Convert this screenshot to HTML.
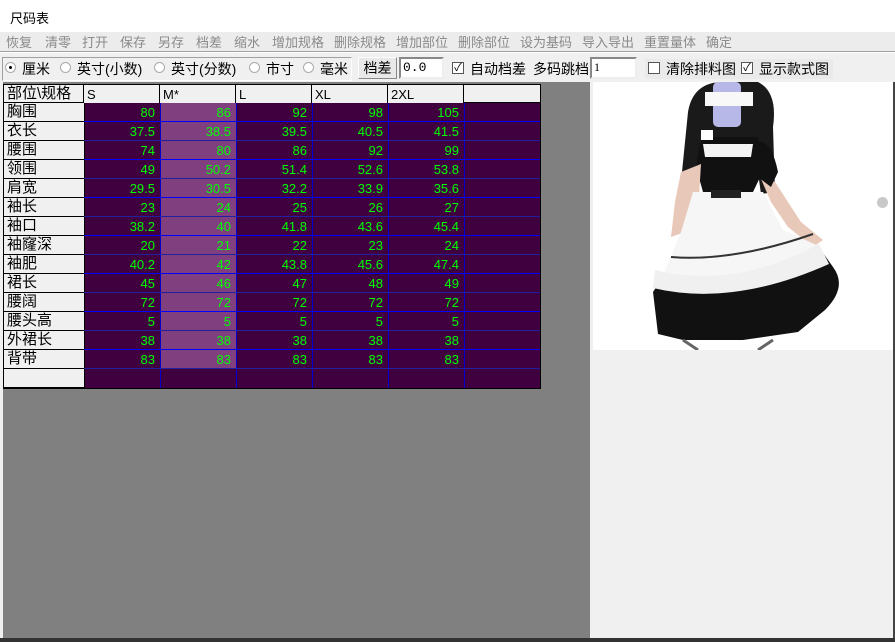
<!DOCTYPE html>
<html><head><meta charset="utf-8"><style>
*{margin:0;padding:0;box-sizing:border-box}
body{width:895px;height:642px;overflow:hidden;background:#fff;font-family:"Liberation Sans","Noto Sans CJK SC",sans-serif;position:relative}
.a{position:absolute}
.m{position:absolute;top:32px;font-size:13px;color:#8a8a8a}
.t{position:absolute;font-size:14px;color:#000;top:59px}
.rad{position:absolute;top:62px;width:11px;height:11px;border:1px solid #aaa;border-radius:50%;background:#fff}
.cb{position:absolute;top:62px;width:12px;height:12px;border:1px solid #555;background:#fff;font-size:11px;line-height:10px;text-align:center}
.rh{position:absolute;left:4px;width:80px;height:19px;background:#f0f0f0;border-bottom:1px solid #000;font-size:15px;line-height:18px;padding-left:3px;font-family:"Liberation Sans","WenQuanYi Zen Hei",sans-serif}
.c{position:absolute;height:19px;font-size:13px;color:#00ff00;text-align:right;padding-right:5px;line-height:19px;font-family:"Liberation Sans",sans-serif}
.h{position:absolute;top:85px;height:18px;background:#f0f0f0;border-right:1px solid #000;font-size:13px;padding-left:3px;line-height:19px}
</style></head><body>
<div class="a" style="left:0;top:0;width:895px;height:32px;background:#fff"></div>
<div class="a" style="left:10px;top:8px;font-size:13px">尺码表</div>
<div class="a" style="left:0;top:32px;width:895px;height:20px;background:#ececec;border-bottom:1px solid #a0a0a0"></div>
<div class="m" style="left:6px">恢复</div><div class="m" style="left:45px">清零</div><div class="m" style="left:82px">打开</div><div class="m" style="left:120px">保存</div><div class="m" style="left:158px">另存</div><div class="m" style="left:196px">档差</div><div class="m" style="left:234px">缩水</div><div class="m" style="left:272px">增加规格</div><div class="m" style="left:334px">删除规格</div><div class="m" style="left:396px">增加部位</div><div class="m" style="left:458px">删除部位</div><div class="m" style="left:520px">设为基码</div><div class="m" style="left:582px">导入导出</div><div class="m" style="left:644px">重置量体</div><div class="m" style="left:706px">确定</div>
<div class="a" style="left:0;top:53px;width:895px;height:29px;background:#f0f0f0"></div>
<div class="a" style="left:2px;top:57px;width:350px;height:24px;border:1px solid #a0a0a0;border-right-color:#fff;border-bottom-color:#fff"></div>
<div class="rad" style="left:5px"><div class="a" style="left:3px;top:3px;width:3px;height:3px;background:#000;border-radius:50%"></div></div>
<div class="t" style="left:22px">厘米</div>
<div class="rad" style="left:60px"></div><div class="t" style="left:77px">英寸(小数)</div>
<div class="rad" style="left:154px"></div><div class="t" style="left:171px">英寸(分数)</div>
<div class="rad" style="left:249px"></div><div class="t" style="left:266px">市寸</div>
<div class="rad" style="left:303px"></div><div class="t" style="left:320px">毫米</div>
<div class="a" style="left:358px;top:57px;width:39px;height:22px;background:#e8e8e8;border:1px solid #888;border-top-color:#fff;border-left-color:#fff;font-size:14px;text-align:center;line-height:20px">档差</div>
<div class="a" style="left:399px;top:57px;width:45px;height:22px;background:#fff;border:2px solid #888;border-right-color:#eee;border-bottom-color:#eee;font-family:'Liberation Mono',monospace;font-size:13px;padding-left:2px;line-height:17px">0.0</div>
<div class="cb" style="left:452px">✓</div><div class="t" style="left:470px">自动档差</div>
<div class="t" style="left:533px">多码跳档</div>
<div class="a" style="left:590px;top:57px;width:47px;height:22px;background:#fff;border:2px solid #888;border-right-color:#eee;border-bottom-color:#eee;font-size:12px;padding-left:2px;line-height:17px;font-family:'Liberation Serif',serif">1</div>
<div class="a" style="left:645px;top:59px;width:188px;height:20px;background:#eaeaea"></div>
<div class="cb" style="left:648px"></div><div class="t" style="left:666px">清除排料图</div>
<div class="cb" style="left:741px">✓</div><div class="t" style="left:759px">显示款式图</div>

<div class="a" style="left:0;top:82px;width:3px;height:560px;background:#f0f0f0"></div>
<div class="a" style="left:3px;top:82px;width:587px;height:556px;background:#808080"></div>
<div class="a" style="left:590px;top:82px;width:3px;height:556px;background:#f0f0f0"></div>
<div class="a" style="left:593px;top:82px;width:300px;height:556px;background:#f0f0f0"></div>
<div class="a" style="left:0;top:638px;width:895px;height:4px;background:#333"></div>
<div class="a" style="left:893px;top:82px;width:2px;height:556px;background:#444"></div>

<svg class="a" style="left:593px;top:82px" width="300" height="268" viewBox="0 0 300 268">
<rect width="300" height="268" fill="#fff"/>
<path d="M95 30 Q100 0 130 0 L165 0 Q185 10 180 45 L182 110 L168 112 L160 55 L108 55 L98 130 L85 130 Z" fill="#1a1a1a"/>
<path d="M108 55 L165 55 L172 85 L160 110 L110 110 L103 85 Z" fill="#111"/>
<path d="M110 62 L160 62 L158 75 L112 75 Z" fill="#f4f4f4"/>
<rect x="120" y="0" width="28" height="45" rx="5" fill="#b8b8e8"/>
<rect x="112" y="10" width="48" height="14" fill="#f8f8f8"/>
<path d="M88 90 L108 82 L106 115 L92 150 L78 155 L82 120 Z" fill="#e8c8b8"/>
<path d="M165 90 L182 100 L208 140 L230 158 L220 165 L195 145 L178 120 Z" fill="#e8c8b8"/>
<path d="M162 60 Q178 55 185 90 L178 105 L165 95 Z" fill="#111"/>
<path d="M100 110 L170 110 L190 148 L228 165 L212 200 L150 208 L90 205 L68 198 L88 150 Z" fill="#f6f6f6"/>
<path d="M68 198 Q140 212 228 168 L240 185 Q255 205 232 228 L205 250 L150 258 L90 258 L65 252 L60 210 Z" fill="#111"/>
<path d="M62 188 Q140 208 226 162 L236 182 Q140 225 60 206 Z" fill="#f0f0f0"/>
<path d="M78 175 Q140 180 220 152" stroke="#333" stroke-width="2" fill="none"/>
<rect x="118" y="108" width="30" height="8" fill="#222"/>
<rect x="108" y="48" width="12" height="10" fill="#fff"/>
<path d="M90 258 L105 268 M180 258 L165 268" stroke="#666" stroke-width="3"/>
</svg>
<div class="a" style="left:877px;top:197px;width:11px;height:11px;border-radius:50%;background:#c8c8c8"></div>

<div class="a" style="left:3px;top:84px;width:538px;height:305px;border:1px solid #000;background:#400040"></div>
<div class="a" style="left:4px;top:85px;width:536px;height:18px;background:#f0f0f0;border-bottom:1px solid #000"></div>
<div class="a" style="left:4px;top:85px;width:80px;height:18px;border-right:1px solid #000;font-size:15px;padding-left:3px;line-height:18px">部位\规格</div>
<div class="h" style="left:84px;width:76px">S</div><div class="h" style="left:160px;width:76px">M*</div><div class="h" style="left:236px;width:76px">L</div><div class="h" style="left:312px;width:76px">XL</div><div class="h" style="left:388px;width:76px">2XL</div>
<div class="a" style="left:160px;top:103px;width:76px;height:266px;background:#804080"></div>
<div class="a" style="left:84px;top:103px;width:1px;height:285px;background:#000"></div>
<div class="a" style="left:160px;top:103px;width:1px;height:285px;background:#0000d0"></div>
<div class="a" style="left:236px;top:103px;width:1px;height:285px;background:#0000d0"></div>
<div class="a" style="left:312px;top:103px;width:1px;height:285px;background:#0000d0"></div>
<div class="a" style="left:388px;top:103px;width:1px;height:285px;background:#0000d0"></div>
<div class="a" style="left:464px;top:103px;width:1px;height:285px;background:#0000d0"></div>
<div id="rows"></div>
<script>
var names=["胸围","衣长","腰围","领围","肩宽","袖长","袖口","袖窿深","袖肥","裙长","腰阔","腰头高","外裙长","背带",""];
var v=[[80,86,92,98,105],[37.5,38.5,39.5,40.5,41.5],[74,80,86,92,99],[49,50.2,51.4,52.6,53.8],[29.5,30.5,32.2,33.9,35.6],[23,24,25,26,27],[38.2,40,41.8,43.6,45.4],[20,21,22,23,24],[40.2,42,43.8,45.6,47.4],[45,46,47,48,49],[72,72,72,72,72],[5,5,5,5,5],[38,38,38,38,38],[83,83,83,83,83]];
var h="";
for(var i=0;i<15;i++){var y=103+i*19;
h+='<div class="rh" style="top:'+y+'px">'+names[i]+'</div>';
if(i<14){for(var j=0;j<5;j++){h+='<div class="c" style="top:'+y+'px;left:'+(84+j*76)+'px;width:76px">'+v[i][j]+'</div>';}
h+='<div class="a" style="left:84px;top:'+(y+18)+'px;width:456px;height:1px;background:'+(i%2==0?'#0000ff':'#2020a0')+'"></div>';}}
document.getElementById("rows").innerHTML=h;
</script>
</body></html>
